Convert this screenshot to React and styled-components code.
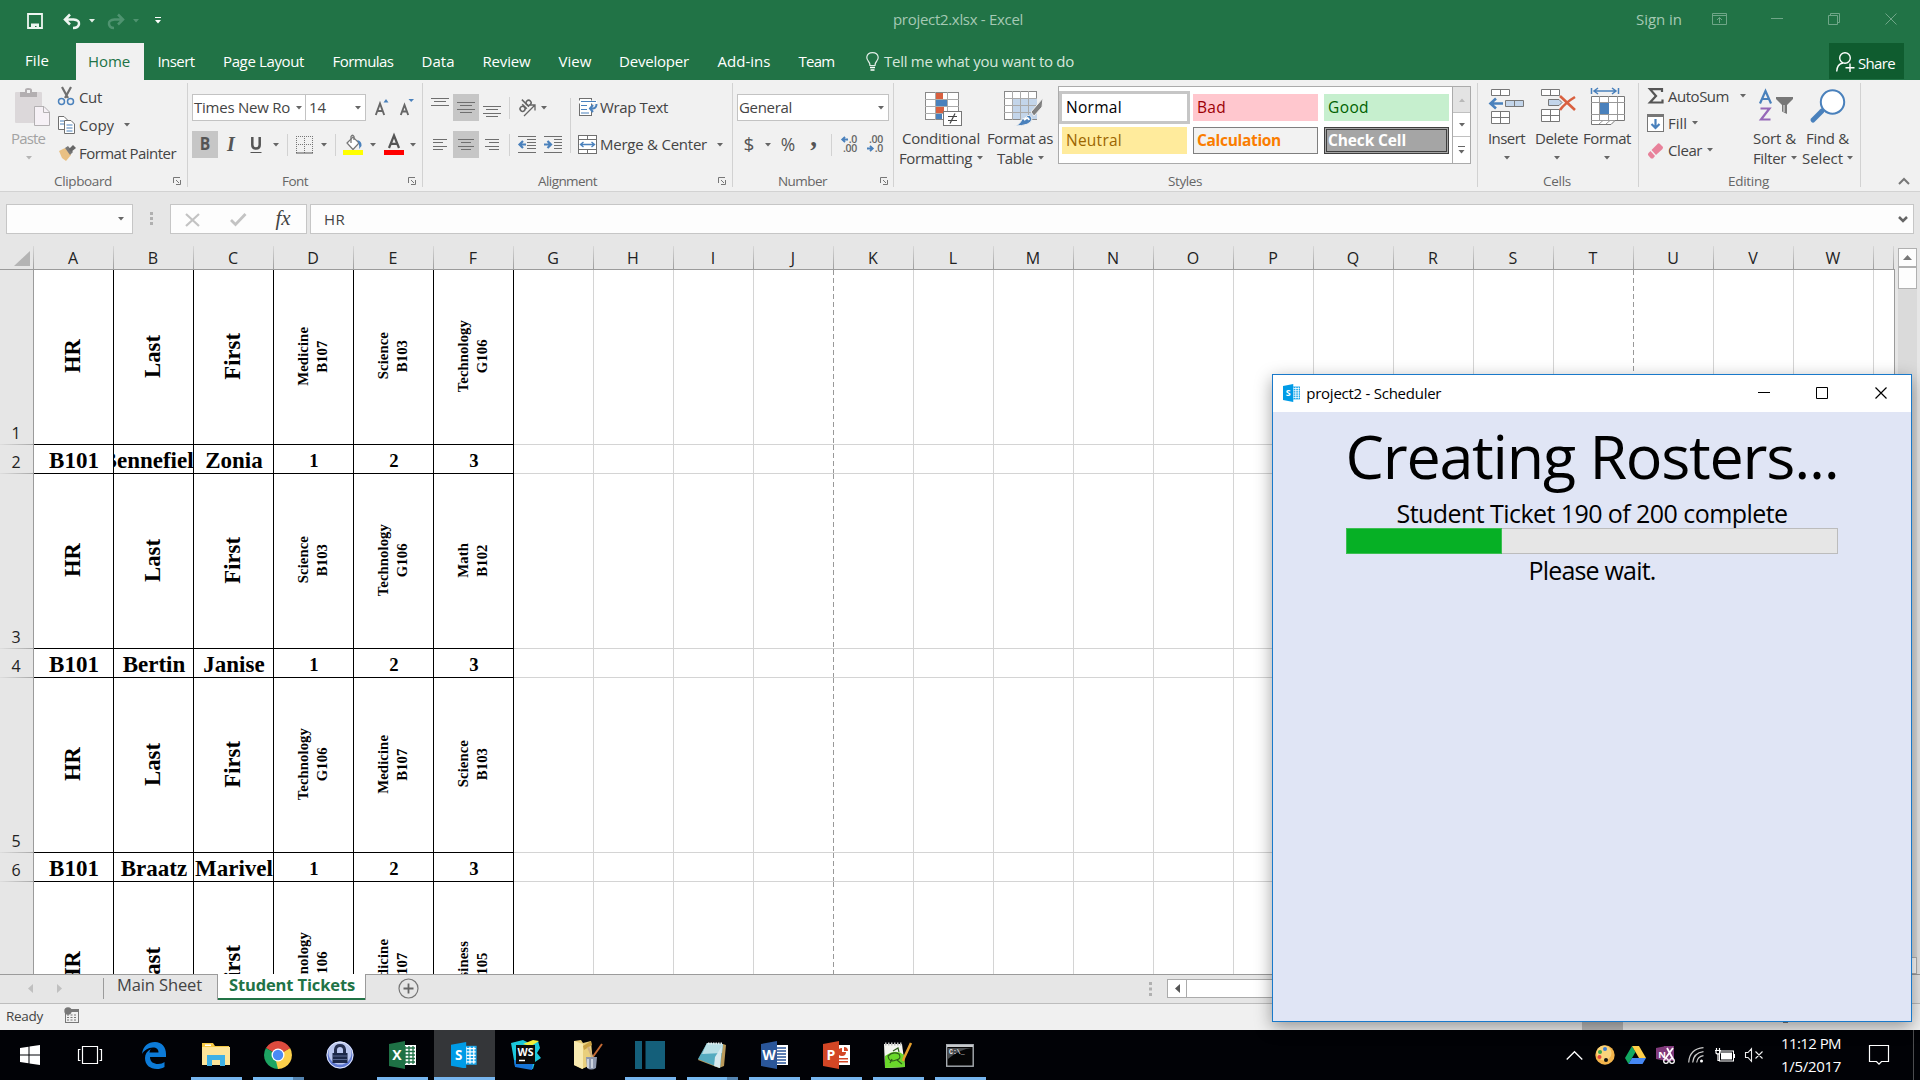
import React, { useLayoutEffect, useRef, useState } from "react";
import styled, { createGlobalStyle, css } from "styled-components";

const Global = createGlobalStyle`
  * { box-sizing: border-box; }
  body { margin: 0; background: #000; overflow: hidden; }
  svg { display: block; flex: none; }
`;

const GREEN = "#217346";
const GRAY = "#6f6f6f";
const BLUE = "#4a81bc";

/* ---------- text that keeps a fixed advance width ---------- */
const FitBox = styled.span`
  display: block;
  flex: none;
  width: ${(p) => p.$w}px;
  margin-left: ${(p) => p.$ml || 0}px;
  margin-top: ${(p) => p.$mt || 0}px;
  text-indent: ${(p) => (p.$size >= 25 ? 0 : -1)}px;
  font-size: ${(p) => p.$size || 15}px;
  font-weight: ${(p) => (p.$bold ? 700 : 400)};
  color: ${(p) => p.$color || "#444"};
  white-space: nowrap;
`;
const FitInner = styled.span`
  display: inline-block;
  text-indent: 0;
  white-space: pre;
`;
function Fit({ w, ml, mt, size, bold, color, children }) {
  const ref = useRef(null);
  const [gap, setGap] = useState(0);
  useLayoutEffect(() => {
    const natural = ref.current.getBoundingClientRect().width;
    setGap((w - natural) / String(children).length);
  }, []);
  return (
    <FitBox $w={w} $ml={ml} $mt={mt} $size={size} $bold={bold} $color={color}>
      <FitInner ref={ref} style={{ letterSpacing: gap }}>{children}</FitInner>
    </FitBox>
  );
}

const Svg = styled.svg`
  margin-left: ${(p) => p.$ml || 0}px;
  margin-top: ${(p) => p.$mt || 0}px;
  overflow: visible;
`;
const Ic = ({ w, h, ml, mt, children }) => (
  <Svg width={w} height={h} viewBox={`0 0 ${w} ${h}`} $ml={ml} $mt={mt} fill="none">{children}</Svg>
);
const Caret = ({ ml, mt, color = "#666" }) => (
  <Ic w={6} h={4} ml={ml} mt={mt}><path d="M0 0H6L3 3.5Z" fill={color} /></Ic>
);

/* ---------- frame ---------- */
const Screen = styled.div`
  position: relative;
  width: 1920px;
  height: 1080px;
  display: flex;
  flex-direction: column;
  overflow: hidden;
  font-family: "Open Sans", "Noto Sans", sans-serif;
  line-height: 20px;
  background: #e6e6e6;
`;
const TitleBar = styled.header`
  height: 43px;
  flex: none;
  display: flex;
  align-items: flex-start;
  background: ${GREEN};
`;
const TitleItem = styled.div`
  margin-left: ${(p) => p.$ml}px;
  margin-top: ${(p) => p.$mt}px;
`;
const TabBar = styled.nav`
  height: 37px;
  flex: none;
  display: flex;
  background: ${GREEN};
`;
const Tab = styled.div`
  width: ${(p) => p.$w}px;
  height: 37px;
  padding-top: ${(p) => (p.$file ? 7 : 8)}px;
  display: flex;
  justify-content: center;
  background: ${(p) => (p.$active ? "#f1f1f1" : "transparent")};
`;
const TellMe = styled.div`
  display: flex;
  padding: 8px 0 0 17px;
  width: 980px;
`;
const Share = styled.div`
  width: 75px;
  height: 36px;
  display: flex;
  padding: 9px 0 0 7px;
  background: #0f5c2f;
`;

/* ---------- ribbon ---------- */
const Ribbon = styled.section`
  height: 112px;
  flex: none;
  display: flex;
  background: #f1f1f1;
  border-bottom: 1px solid #d2d2d2;
`;
const Group = styled.div`
  width: ${(p) => p.$w}px;
  height: 111px;
  flex: none;
  display: flex;
  flex-direction: column;
  border-right: 1px solid transparent;
  border-image: linear-gradient(#f1f1f1 4px, #d2d2d2 4px, #d2d2d2 106px, #f1f1f1 106px) 1;
`;
const GroupBody = styled.div`
  height: 91px;
  display: flex;
`;
const GroupFoot = styled.div`
  height: 20px;
  display: flex;
  align-items: flex-start;
`;
const Stack = styled.div`
  display: flex;
  flex-direction: column;
  gap: ${(p) => p.$gap || 0}px;
  padding-top: ${(p) => p.$pt || 0}px;
  margin-left: ${(p) => p.$ml || 0}px;
`;
const Line = styled.div`
  display: flex;
  align-items: center;
  height: ${(p) => p.$h || 27}px;
  padding-left: ${(p) => p.$pl || 0}px;
`;
const BigButton = styled.div`
  width: ${(p) => p.$w}px;
  margin-left: ${(p) => p.$ml || 0}px;
  padding-top: 6px;
  display: flex;
  flex-direction: column;
  flex: none;
`;
const BigIcon = styled.div`
  height: 42px;
  padding: ${(p) => p.$pt || 0}px 0 0 ${(p) => p.$pl || 0}px;
`;
const Toggle = styled.div`
  width: 26px;
  height: 27px;
  flex: none;
  display: flex;
  align-items: center;
  justify-content: center;
  margin-left: ${(p) => p.$ml || 0}px;
  background: ${(p) => (p.$on ? "#c6c6c6" : "transparent")};
`;
const Divider = styled.div`
  width: 1px;
  flex: none;
  height: ${(p) => p.$h || 22}px;
  margin-left: ${(p) => p.$ml || 0}px;
  margin-top: ${(p) => p.$mt || 0}px;
  background: ${(p) => p.$c || "#d2d2d2"};
`;
const Combo = styled.div`
  width: ${(p) => p.$w}px;
  height: 27px;
  flex: none;
  margin-left: ${(p) => p.$ml || 0}px;
  display: flex;
  align-items: center;
  background: #fff;
  border: 1px solid #c3c3c3;
`;
const Glyph = styled.span`
  font-size: ${(p) => p.$size}px;
  font-family: ${(p) => (p.$serif ? '"Liberation Serif", serif' : "inherit")};
  font-weight: ${(p) => (p.$bold ? 700 : 400)};
  font-style: ${(p) => (p.$italic ? "italic" : "normal")};
  color: ${(p) => p.$color || "#555"};
  line-height: 20px;
  width: ${(p) => p.$w}px;
  text-align: center;
  flex: none;
  margin-left: ${(p) => p.$ml || 0}px;
  margin-top: ${(p) => p.$mt || 0}px;
  transform: scaleX(${(p) => p.$sx || 1});
`;

const Launcher = ({ ml }) => (
  <Ic w={8} h={8} ml={ml} mt={6}><path d="M0.5 6V0.5H7M3 3L6 6M7.5 3V7.5H3" stroke="#777" /></Ic>
);
const Foot = ({ pl, w, text, launch }) => (
  <GroupFoot>
    <Fit w={w} ml={pl} size={13.5} color="#666">{text}</Fit>
    {launch && <Launcher ml={launch} />}
  </GroupFoot>
);

function HLines({ rows, w, h, ml, mt, color = GRAY }) {
  return (
    <Ic w={w} h={h} ml={ml} mt={mt}>
      {rows.map(([x1, x2, y], i) => <path key={i} d={`M${x1} ${y + 0.5}H${x2}`} stroke={color} />)}
    </Ic>
  );
}

function Clipboard() {
  return (
    <Group $w={188}>
      <GroupBody>
        <BigButton $w={44} $ml={12}>
          <BigIcon $pt={2} $pl={3}>
            <Ic w={35} h={38}>
              <rect x="0" y="4" width="27" height="31" rx="1" fill="#dcd8da" />
              <path d="M5 4H10V2Q10 0 13 0Q17 0 17 2V4H22V9H5Z" fill="#b3afb1" /><rect x="12" y="2" width="3" height="3" fill="#f1f1f1" />
              <path d="M19.5 18.5H29L34.5 24V37.500H19.5Z" fill="#f6f1f6" stroke="#b3b0b2" /><path d="M28.500 18.500V24.500H34.500" stroke="#b3b0b2" />
            </Ic>
          </BigIcon>
          <Fit w={34} color="#a3a3a3">Paste</Fit>
          <Caret ml={14} mt={8} color="#b5b5b5" />
        </BigButton>
        <Stack $pt={2} $ml={2}>
          <Line $h={28}>
            <Ic w={17} h={19} mt={1}>
              <path d="M4 0L10 11M13 0L7 11" stroke="#6f6f6f" strokeWidth="2.200" />
              <circle cx="3.500" cy="14.500" r="3" stroke={BLUE} strokeWidth="1.500" /><circle cx="12.500" cy="14.500" r="3" stroke={BLUE} strokeWidth="1.500" />
            </Ic>
            <Fit w={23} ml={5} mt={2}>Cut</Fit>
          </Line>
          <Line $h={29}>
            <Ic w={17} h={18}>
              <path d="M0.500 0.500H6L9.500 4V13.500H0.500Z" fill="#fff" stroke={GRAY} /><path d="M2 5H6M2 8H6" stroke={BLUE} />
              <path d="M6.500 4.500H13L16.500 8V17.500H6.500Z" fill="#fff" stroke={GRAY} /><path d="M8.500 9H14.500M8.500 12H14.500M8.500 15H14.500" stroke={BLUE} />
            </Ic>
            <Fit w={35} ml={5}>Copy</Fit><Caret ml={9} />
          </Line>
          <Line $h={27}>
            <Ic w={18} h={16}>
              <path d="M1 6L7 3L13 10L8 16L4 13Z" fill="#e9c083" /><path d="M7 3L10 1L15 7L12 10Z" fill="#777" /><path d="M11 4L15 0L18 3L13 7Z" fill="#666" />
            </Ic>
            <Fit w={97} ml={4}>Format Painter</Fit>
          </Line>
        </Stack>
      </GroupBody>
      <Foot pl={55} w={58} text="Clipboard" launch={60} />
    </Group>
  );
}

function FontGroup() {
  return (
    <Group $w={235}>
      <GroupBody>
        <Stack $pt={14} $gap={10} $ml={4}>
          <Line>
            <Combo $w={114}><Fit w={96} ml={2} mt={-2}>Times New Ro</Fit><Caret ml={5} /></Combo>
            <Combo $w={61} $ml={-1}><Fit w={17} ml={4} mt={-2}>14</Fit><Caret ml={28} /></Combo>
            <Ic w={14} h={16} ml={9} mt={-2}>
              <path d="M8.500 3.500L11 0L13.500 3.500Z" fill={BLUE} /><path d="M0.800 16L5 4.500L9.200 16M2.200 12H7.800" stroke="#666" strokeWidth="1.900" />
            </Ic>
            <Ic w={15} h={16} ml={11} mt={-2}>
              <path d="M8.500 0H14L11.200 3Z" fill={BLUE} /><path d="M0.800 16L4.500 6L8.200 16M2.200 12.500H7" stroke="#666" strokeWidth="1.900" />
            </Ic>
          </Line>
          <Line>
            <Toggle $on><Glyph $size={17} $bold $w={14} $mt={-2} $sx={0.92}>B</Glyph></Toggle>
            <Glyph $size={20} $serif $bold $italic $w={14} $ml={6} $mt={-1}>I</Glyph>
            <Ic w={12} h={17} ml={12} mt={1}><path d="M2.300 0V8Q2.300 11.500 6 11.500Q9.700 11.500 9.700 8V0" stroke="#555" strokeWidth="2.500" /><path d="M0.500 15.500H11.500" stroke="#555" /></Ic>
            <Caret ml={11} />
            <Divider $ml={8} />
            <Ic w={17} h={18} ml={8}>
              <path d="M0.500 0V17M8.500 0V17M16.500 0V17M0 0.500H17M0 8.500H17" stroke="#777" strokeDasharray="1 1" /><path d="M0 17H17" stroke="#555" />
            </Ic>
            <Caret ml={8} /><Divider $ml={8} />
            <Ic w={21} h={20} ml={7}>
              <path d="M4 8L10 2L16 8L10 14.500Z" fill="#fff" stroke="#777" strokeWidth="1.200" /><path d="M8 8V1.500Q9.500-1 11 1.500V5" stroke="#777" strokeWidth="1.300" />
              <path d="M14 5Q19 6 18.500 11L16 14Q17 9 14 5Z" fill={BLUE} /><rect y="15" width="20" height="5" fill="#ff0" />
            </Ic>
            <Caret ml={6} />
            <Ic w={20} h={20} ml={8}><path d="M5 13L10 0.500L15 13M7 8.800H13" stroke="#555" strokeWidth="2.200" /><rect y="15" width="20" height="5" fill="#f00" /></Ic>
            <Caret ml={6} />
          </Line>
        </Stack>
      </GroupBody>
      <Foot pl={95} w={26} text="Font" launch={99} />
    </Group>
  );
}

function Alignment() {
  return (
    <Group $w={310}>
      <GroupBody>
        <Stack $pt={14} $gap={10} $ml={5}>
          <Line>
            <HLines w={18} h={8} ml={3} mt={-11} rows={[[0, 18, 0], [3, 15, 3], [0, 18, 7]]} />
            <Toggle $on $ml={4}><HLines w={18} h={13} rows={[[0, 18, 1], [3, 15, 4], [0, 18, 8], [3, 15, 11]]} /></Toggle>
            <HLines w={18} h={11} ml={4} mt={7} rows={[[0, 18, 0], [3, 15, 3], [0, 18, 7], [3, 15, 10]]} />
            <Divider $ml={8} />
            <Ic w={20} h={18} ml={7} mt={-2}>
              <g transform="rotate(-45 7 8)" stroke="#666" strokeWidth="1.500"><circle cx="4" cy="9" r="2.500" /><path d="M7 5.500V12M10 2V12" /><circle cx="12.500" cy="9" r="2.500" /></g>
              <path d="M7 18L18 7M12.500 7H18V12.500" stroke="#666" strokeWidth="1.300" />
            </Ic>
            <Caret ml={4} />
          </Line>
          <Line>
            <HLines w={14} h={11} ml={5} rows={[[0, 14, 0], [0, 10, 3], [0, 14, 7], [0, 10, 10]]} />
            <Toggle $on $ml={6}><HLines w={16} h={11} rows={[[0, 16, 0], [3, 13, 3], [0, 16, 7], [3, 13, 10]]} /></Toggle>
            <HLines w={14} h={11} ml={6} rows={[[0, 14, 0], [4, 14, 3], [0, 14, 7], [4, 14, 10]]} />
            <Divider $ml={10} />
            <Ic w={18} h={17} ml={8} mt={-1}>
              <path d="M0 0.500H18M9 3.500H18M9 6.500H18M9 9.500H18M9 12.500H18M0 16.500H18" stroke={GRAY} /><path d="M8 8.500H2M5 5L1.500 8.500L5 12" stroke={BLUE} strokeWidth="2.200" />
            </Ic>
            <Ic w={18} h={17} ml={8} mt={-1}>
              <path d="M0 0.500H18M10 3.500H18M10 6.500H18M10 9.500H18M10 12.500H18M0 16.500H18" stroke={GRAY} /><path d="M0 8.500H6M3.500 5L7 8.500L3.500 12" stroke={BLUE} strokeWidth="2.200" />
            </Ic>
          </Line>
        </Stack>
        <Divider $h={55} $ml={8} $mt={18} />
        <Stack $pt={14} $gap={10} $ml={7}>
          <Line>
            <Ic w={19} h={19} ml={1} mt={-1}>
              <rect x="0.500" y="0.500" width="12" height="17" fill="#fff" stroke={GRAY} /><path d="M0 5.500H18V2.500H0Z" fill="#fff" />
              <path d="M2 3.500H17M2 7.500H8M2 11.500H8M2 15H10" stroke={BLUE} /><path d="M11 10.500H14Q17.500 10 17.500 6M14 7L11 10.500L14 14" stroke={BLUE} strokeWidth="2" />
            </Ic>
            <Fit w={68} ml={3} mt={-2}>Wrap Text</Fit>
          </Line>
          <Line>
            <Ic w={19} h={19} mt={-1}>
              <rect x="0.500" y="0.500" width="18" height="18" fill="#fff" stroke={GRAY} /><path d="M0 4.500H19M0 14.500H19M9.500 0V4.500M9.500 14.500V19" stroke={GRAY} />
              <path d="M2.500 9.500H16.500M5.500 7L2.500 9.500L5.500 12M13.500 7L16.500 9.500L13.500 12" stroke={BLUE} strokeWidth="1.400" />
            </Ic>
            <Fit w={107} ml={4} mt={-2}>Merge &amp; Center</Fit><Caret ml={9} />
          </Line>
        </Stack>
      </GroupBody>
      <Foot pl={116} w={59} text="Alignment" launch={120} />
    </Group>
  );
}

const DecBox = styled.div`
  width: 17px;
  margin-left: ${(p) => p.$ml}px;
  margin-top: -1px;
  display: flex;
  flex-direction: column;
  font-size: 10.5px;
  font-weight: 600;
  line-height: 9px;
  letter-spacing: -0.3px;
  color: #666;
`;
const DecRow = styled.div`
  display: flex;
  justify-content: flex-end;
  align-items: center;
  gap: 1px;
  height: 9px;
`;
const TinyArrow = ({ flip }) => (
  <Ic w={7} h={7}><path d={flip ? "M0 3.500H5M3 0.800L5.800 3.500L3 6.200" : "M7 3.500H2M4 0.800L1.200 3.500L4 6.200"} stroke={BLUE} strokeWidth="1.800" /></Ic>
);
function NumberGroup() {
  return (
    <Group $w={161}>
      <GroupBody>
        <Stack $pt={14} $gap={10} $ml={4}>
          <Line><Combo $w={152}><Fit w={53} ml={2} mt={-2}>General</Fit><Caret ml={85} /></Combo></Line>
          <Line>
            <Glyph $size={19} $w={12} $ml={6} $mt={-2}>$</Glyph><Caret ml={10} />
            <Glyph $size={19} $w={18} $ml={8} $mt={-2} $sx={0.92}>%</Glyph>
            <Glyph $size={27} $serif $bold $w={9} $ml={12} $mt={-16}>,</Glyph>
            <Divider $ml={13} />
            <DecBox $ml={8}><DecRow><TinyArrow />.0</DecRow><DecRow>.00</DecRow></DecBox>
            <DecBox $ml={9}><DecRow>.00</DecRow><DecRow><TinyArrow flip />.0</DecRow></DecBox>
          </Line>
        </Stack>
      </GroupBody>
      <Foot pl={46} w={49} text="Number" launch={52} />
    </Group>
  );
}

const Gallery = styled.div`
  margin-left: 4px;
  margin-top: 6px;
  width: 413px;
  height: 78px;
  flex: none;
  display: flex;
  background: #fff;
  border: 1px solid #ababab;
`;
const Swatches = styled.div`
  width: 394px;
  padding: 7px 3px;
  display: grid;
  grid-template-columns: repeat(3, 125px);
  grid-auto-rows: 27px;
  gap: 6px;
`;
const Swatch = styled.div`
  display: flex;
  align-items: center;
  padding-bottom: 1px;
  background: ${(p) => p.$bg};
  ${(p) => p.$kind === "on" && css`box-shadow: 0 0 0 3px #c6c6c6;`}
  ${(p) => p.$kind === "line" && css`box-shadow: inset 0 0 0 1px #7f7f7f;`}
  ${(p) => p.$kind === "double" && css`box-shadow: inset 0 0 0 1px #3f3f3f, inset 0 0 0 2px #a5a5a5, inset 0 0 0 3px #3f3f3f;`}
`;
const Spin = styled.div`
  width: 18px;
  display: flex;
  flex-direction: column;
  border-left: 1px solid #ababab;
`;
const SpinCell = styled.div`
  height: ${(p) => p.$h}px;
  display: flex;
  align-items: center;
  justify-content: center;
  background: ${(p) => (p.$off ? "#e3e3e3" : "#fff")};
  border-bottom: ${(p) => (p.$last ? "none" : "1px solid #c0c0c0")};
`;
function Styles() {
  return (
    <Group $w={584}>
      <GroupBody>
        <BigButton $w={84} $ml={6}>
          <BigIcon $pt={6} $pl={25}>
            <Ic w={36} h={34}>
              <rect x="0.500" y="0.500" width="33" height="27" fill="#fff" stroke="#888" /><path d="M0 7.500H34M0 14.500H34M0 21.500H34M10.500 0V28M22.500 0V28" stroke="#aaa" />
              <path d="M11 1H18V7H11ZM11 15H19V21H11Z" fill="#d9603f" /><path d="M11 8H22V14H11ZM11 22H17V27H11Z" fill={BLUE} />
              <rect x="18.500" y="19.500" width="18" height="14" fill="#fff" stroke="#777" /><path d="M23 24.500H32M23 28.500H32M30 21.500L25 31.500" stroke="#444" strokeWidth="1.200" />
            </Ic>
          </BigIcon>
          <Fit w={78} ml={3}>Conditional</Fit>
          <Line $h={19}><Fit w={73}>Formatting</Fit><Caret ml={4} /></Line>
        </BigButton>
        <BigButton $w={66} $ml={4}>
          <BigIcon $pt={5} $pl={16}>
            <Ic w={37} h={36}>
              <rect x="0.500" y="0.500" width="32" height="28" fill="#fff" stroke="#888" /><rect x="9" y="8" width="24" height="20" fill="#c3d5ea" />
              <path d="M0 7.500H33M0 14.500H33M0 21.500H33M8.500 0V29M16.500 0V29M24.500 0V29" stroke="#aaa" />
              <path d="M39 7L27 21L30 25L38 16Z" fill="#808080" stroke="#f1f1f1" /><path d="M21 27Q26 21 28 28Q27 35 10 35Q16 34 18 28Z" fill={BLUE} stroke="#f1f1f1" /><path d="M20 29Q24 25 25 29" stroke="#fff" strokeWidth="2" />
            </Ic>
          </BigIcon>
          <Fit w={66}>Format as</Fit>
          <Line $h={19} $pl={10}><Fit w={36}>Table</Fit><Caret ml={4} /></Line>
        </BigButton>
        <Gallery>
          <Swatches>
            <Swatch $bg="#fff" $kind="on"><Fit w={56} ml={5} size={15.5} color="#000">Normal</Fit></Swatch>
            <Swatch $bg="#ffc7ce"><Fit w={29} ml={5} size={15.5} color="#9c0006">Bad</Fit></Swatch>
            <Swatch $bg="#c6efce"><Fit w={41} ml={5} size={15.5} color="#006100">Good</Fit></Swatch>
            <Swatch $bg="#ffeb9c"><Fit w={56} ml={5} size={15.5} color="#9c6500">Neutral</Fit></Swatch>
            <Swatch $bg="#f2f2f2" $kind="line"><Fit w={84} ml={5} size={15.5} bold color="#fa7d00">Calculation</Fit></Swatch>
            <Swatch $bg="#a5a5a5" $kind="double"><Fit w={78} ml={5} size={15.5} bold color="#fff">Check Cell</Fit></Swatch>
          </Swatches>
          <Spin>
            <SpinCell $h={26} $off><Ic w={6} h={4}><path d="M0 4H6L3 0.500Z" fill="#b8b8b8" /></Ic></SpinCell>
            <SpinCell $h={24}><Caret /></SpinCell>
            <SpinCell $h={26} $last><Ic w={7} h={8}><path d="M0 0.500H7" stroke="#666" /><path d="M0.500 4H6.500L3.500 7.500Z" fill="#666" /></Ic></SpinCell>
          </Spin>
        </Gallery>
      </GroupBody>
      <Foot pl={275} w={34} text="Styles" />
    </Group>
  );
}

function Cells() {
  return (
    <Group $w={161}>
      <GroupBody>
        <BigButton $w={38} $ml={10}>
          <BigIcon $pt={3}>
            <Ic w={37} h={35}>
              <path d="M3.500 0.500H21.500V6.500H3.500ZM12.500 0.500V6.500M3.500 22.500H21.500V34.500H3.500ZM3.500 28.500H21.500M12.500 22.500V34.500" fill="#fff" stroke="#777" />
              <path d="M17.500 11.500H35.500V17.500H17.500ZM26.500 11.500V17.500" fill="#c3d5ea" stroke="#777" /><path d="M15 14.500H3M8 9.500L2.500 14.500L8 19.500" stroke={BLUE} strokeWidth="2.600" />
            </Ic>
          </BigIcon>
          <Fit w={37} ml={1}>Insert</Fit><Caret ml={16} mt={8} />
        </BigButton>
        <BigButton $w={44} $ml={10}>
          <BigIcon $pt={3} $pl={5}>
            <Ic w={36} h={34}>
              <path d="M0.500 0.500H18.500V6.500H0.500ZM9.500 0.500V6.500M0.500 20.500H18.500V32.500H0.500ZM0.500 26.500H18.500M9.500 20.500V32.500" fill="#fff" stroke="#777" />
              <path d="M7.500 10.500H18L21 13.500L18 16.500H7.500Z" fill="#c3d5ea" stroke="#777" /><path d="M19 7L34 21M34 8Q24 14 19 21" stroke="#d9603f" strokeWidth="2.600" />
            </Ic>
          </BigIcon>
          <Fit w={43}>Delete</Fit><Caret ml={18} mt={8} />
        </BigButton>
        <BigButton $w={48} $ml={4}>
          <BigIcon $pt={2} $pl={7}>
            <Ic w={35} h={37}>
              <path d="M0.500 0V6M27.500 0V6M3 3H25M7 0L3 3L7 6M21 0L25 3L21 6" stroke={BLUE} strokeWidth="1.500" />
              <path d="M0.500 8.500H33.500V32.500H24L20 36.500H0.500Z" fill="#fff" stroke="#777" /><path d="M0 14.500H34M0 26.500H34M8.500 8V32M17.500 8V32M26.500 8V32M0 32.500H24M8 36L12 32.500M15 36L19 32.500" stroke="#999" />
              <rect x="9" y="15" width="9" height="11" fill={BLUE} />
            </Ic>
          </BigIcon>
          <Fit w={48}>Format</Fit><Caret ml={20} mt={8} />
        </BigButton>
      </GroupBody>
      <Foot pl={66} w={28} text="Cells" />
    </Group>
  );
}

function Editing() {
  return (
    <Group $w={222}>
      <GroupBody>
        <Stack $pt={3} $ml={8}>
          <Line $h={26}>
            <Ic w={16} h={16} ml={1}><path d="M14 4V1.200H2L8 8L2 14.500H14.500V11.500" stroke="#555" strokeWidth="2.200" /></Ic>
            <Fit w={61} ml={5}>AutoSum</Fit><Caret ml={10} mt={-1} />
          </Line>
          <Line $h={28}>
            <Ic w={17} h={18}><rect x="0.500" y="0.500" width="16" height="17" fill="#fff" stroke="#777" /><path d="M0 1.500H17" stroke="#777" strokeWidth="3" /><path d="M8.500 5V14M4.500 10L8.500 14L12.500 10" stroke={BLUE} strokeWidth="2.200" /></Ic>
            <Fit w={19} ml={5}>Fill</Fit><Caret ml={4} />
          </Line>
          <Line $h={27}>
            <Ic w={17} h={16}><path d="M11 0.500Q12 0 13 1L16 4Q16 5 15.500 6L9 12L4.500 7Z" fill="#e8819a" /><path d="M3.500 8L8 13L6 15.500H4L1 12V10.500Z" fill="#e8819a" /></Ic>
            <Fit w={34} ml={5} mt={-2}>Clear</Fit><Caret ml={4} mt={-1} />
          </Line>
        </Stack>
        <BigButton $w={44} $ml={8}>
          <BigIcon $pt={4} $pl={5}>
            <Ic w={35} h={32}>
              <path d="M1 13.500L6.500 1L12 13.500M3 9H10" stroke={BLUE} strokeWidth="2.200" /><path d="M1.500 18.500H10.500L2 29.500H11.500" stroke="#9668b8" strokeWidth="2.200" />
              <path d="M17 7H34V9L28 15V24L23 21.500V15L17 9Z" fill="#777" /><path d="M25 15V22" stroke="#f1f1f1" />
            </Ic>
          </BigIcon>
          <Fit w={43}>Sort &amp;</Fit>
          <Line $h={19}><Fit w={33}>Filter</Fit><Caret ml={4} /></Line>
        </BigButton>
        <BigButton $w={48} $ml={5}>
          <BigIcon $pt={3} $pl={8}>
            <Ic w={35} h={34}><path d="M11 22L2 31" stroke={BLUE} strokeWidth="5" strokeLinecap="round" /><circle cx="21.500" cy="13" r="11.700" fill="#fff" stroke={BLUE} strokeWidth="2" /></Ic>
          </BigIcon>
          <Fit w={43} ml={4}>Find &amp;</Fit>
          <Line $h={19}><Fit w={41}>Select</Fit><Caret ml={3} /></Line>
        </BigButton>
      </GroupBody>
      <Foot pl={90} w={41} text="Editing" />
    </Group>
  );
}

/* ---------- formula bar ---------- */
const FormulaBar = styled.section`
  height: 50px;
  flex: none;
  display: flex;
  padding: 12px 0 0 6px;
  background: #e6e6e6;
`;
const Field = styled.div`
  width: ${(p) => p.$w}px;
  margin-left: ${(p) => p.$ml || 0}px;
  height: 30px;
  flex: none;
  display: flex;
  align-items: center;
  background: #fdfdfd;
  border: 1px solid #c6c6c6;
`;

/* ---------- sheet ---------- */
const Sheet = styled.main`
  height: 732px;
  flex: none;
  display: flex;
  overflow: hidden;
`;
const Grid = styled.div`
  width: 1895px;
  flex: none;
  overflow: hidden;
  border-right: 1px solid #9b9b9b;
  border-image: linear-gradient(#e6e6e6 28px, #9b9b9b 28px) 1;
`;
const Row = styled.div`
  display: grid;
  grid-template-columns: 34px repeat(23, 80px) 20px;
  height: ${(p) => p.$h}px;
`;
const ColHead = styled.div`
  border-bottom: 1px solid #9b9b9b;
  padding-top: ${(p) => (p.$corner ? 9 : 6)}px;
  padding-right: ${(p) => (p.$corner ? 0 : 2)}px;
  font-size: 16px;
  text-align: center;
  color: #222;
  background: linear-gradient(#d8d8d8, #9b9b9b) right 4px / 1px 24px no-repeat;
`;
const RowHead = styled.div`
  display: flex;
  align-items: flex-end;
  justify-content: center;
  padding: 0 1px 1px 0;
  font-size: 16px;
  line-height: 22px;
  color: #222;
  border-right: 1px solid #9b9b9b;
  background: linear-gradient(90deg, #dedede, #a8a8a8) left bottom / 100% 1px no-repeat #e6e6e6;
`;
const Cell = styled.div`
  display: flex;
  align-items: center;
  justify-content: center;
  overflow: hidden;
  background: #fff;
  border-bottom: 1px solid ${(p) => (p.$ink ? "#000" : "#d4d4d4")};
  border-right: 1px solid ${(p) => (p.$ink ? "#000" : "#d4d4d4")};
  ${(p) => p.$last && "border-right: none;"}
  ${(p) => p.$dash && css`
    border-right: none;
    background: repeating-linear-gradient(#999 0 5px, #fff 5px 8px) right / 1px 100% no-repeat #fff;
  `}
  font-family: "Liberation Serif", serif;
  font-weight: 700;
  font-size: ${(p) => p.$size || 23}px;
  padding-top: ${(p) => (p.$flat ? 3 : 0)}px;
  padding-left: ${(p) => (p.$flat ? 1 : 0)}px;
  white-space: nowrap;
  color: #000;
`;
const Turned = styled.div`
  writing-mode: vertical-rl;
  transform: rotate(180deg);
  text-align: center;
  line-height: ${(p) => (p.$small ? 18.5 : 26)}px;
  font-size: ${(p) => (p.$small ? 14.7 : 22.7)}px;
  letter-spacing: ${(p) => (p.$small ? 0.1 : 0)}px;
  margin: 0 2px 2px 0;
`;
const COLS = "ABCDEFGHIJKLMNOPQRSTUVW".split("");
const ROWS = [
  ["HR", "Last", "First", "Medicine|B107", "Science|B103", "Technology|G106"],
  ["B101", "Bennefield", "Zonia", "1", "2", "3"],
  ["HR", "Last", "First", "Science|B103", "Technology|G106", "Math|B102"],
  ["B101", "Bertin", "Janise", "1", "2", "3"],
  ["HR", "Last", "First", "Technology|G106", "Medicine|B107", "Science|B103"],
  ["B101", "Braatz", "Marivel", "1", "2", "3"],
  ["HR", "Last", "First", "Technology|G106", "Medicine|B107", "Business|B105"],
];
function SheetRow({ cells, index }) {
  const tall = index % 2 === 0;
  return (
    <Row $h={tall ? 175 : 29}>
      <RowHead>{index + 1}</RowHead>
      {COLS.map((c, i) => {
        const t = cells[i];
        if (t === undefined) return <Cell key={c} $dash={c === "J" || c === "T"} />;
        if (!tall) return <Cell key={c} $ink $flat $size={i > 2 ? 18.7 : 23}>{t}</Cell>;
        return (
          <Cell key={c} $ink>
            <Turned $small={i > 2}>{t.split("|").map((s) => <div key={s}>{s}</div>)}</Turned>
          </Cell>
        );
      })}
      <Cell $last />
    </Row>
  );
}
const ScrollCol = styled.div`
  width: 25px;
  padding: 6px 3px 0 3px;
  display: flex;
  flex-direction: column;
  background: #e6e6e6;
`;
const ScrollBtn = styled.div`
  height: ${(p) => p.$h}px;
  flex: none;
  display: flex;
  align-items: center;
  justify-content: center;
  background: #fdfdfd;
  border: 1px solid #b0b0b0;
`;
const Track = styled.div`
  flex: 1;
  background: #dadada;
`;

/* ---------- sheet tabs / status ---------- */
const SheetTabs = styled.div`
  height: 29px;
  flex: none;
  display: flex;
  overflow: hidden;
  background: linear-gradient(#9b9b9b, #9b9b9b) 0 0 / 100% 1px no-repeat #e6e6e6;
`;
const SheetTab = styled.div`
  width: ${(p) => p.$w}px;
  height: ${(p) => (p.$on ? 26 : 25)}px;
  display: flex;
  flex: none;
  padding: 1px 0 0 ${(p) => (p.$on ? 12 : 14)}px;
  ${(p) => p.$on && css`background: #fff; border: solid #9b9b9b; border-width: 0 1px; box-shadow: inset 0 -2px 0 ${GREEN};`}
`;
const HThumb = styled.div`
  width: 500px;
  height: 19px;
  flex: none;
  margin-top: 5px;
  background: #fff;
  border: 1px solid #ababab;
`;
const HBtn = styled(HThumb)`
  width: 20px;
  margin-left: 15px;
  margin-right: -1px;
  display: flex;
  align-items: center;
  justify-content: center;
`;
const Status = styled.div`
  height: 27px;
  flex: none;
  display: flex;
  align-items: flex-start;
  padding: 3px 0 0 7px;
  background: #f0f0f0;
  border-top: 1px solid #bdbdbd;
`;
const StatusMark = styled.div`
  width: ${(p) => p.$w}px;
  height: ${(p) => p.$h}px;
  margin-left: ${(p) => p.$ml}px;
  background: ${(p) => p.$c};
`;

/* ---------- scheduler window ---------- */
const Dialog = styled.section`
  position: absolute;
  left: 1272px;
  top: 374px;
  width: 640px;
  height: 648px;
  display: flex;
  flex-direction: column;
  background: #e0e5f5;
  border: 1px solid #1979ca;
  box-shadow: 0 5px 16px rgba(0, 0, 0, 0.38);
`;
const DialogBar = styled.div`
  height: 37px;
  flex: none;
  display: flex;
  align-items: flex-start;
  padding: 9px 0 0 10px;
  background: #fff;
`;
const DialogBody = styled.div`
  display: flex;
  flex-direction: column;
  align-items: center;
`;
const Text = styled.div`
  line-height: ${(p) => p.$lh}px;
  height: ${(p) => p.$lh}px;
  margin-top: ${(p) => p.$mt || 0}px;
`;
const Progress = styled.div`
  width: 492px;
  height: 26px;
  margin-top: 1px;
  background: #e6e6e6;
  border: 1px solid #bcbcbc;
`;
const Bar = styled.div`
  height: 26px;
  margin: -1px 0 0 -1px;
  background: #06b025;
  border: 1px solid #3cbf52;
`;
const progress = 156;

/* ---------- taskbar ---------- */
const Taskbar = styled.footer`
  height: 50px;
  flex: none;
  display: flex;
  background: #010206;
`;
const Slot = styled.div`
  width: 62px;
  height: 50px;
  flex: none;
  display: flex;
  flex-direction: column;
  align-items: center;
  justify-content: space-between;
  background: ${(p) => (p.$on ? "linear-gradient(90deg, #343639 61px, transparent 61px)" : "transparent")};
`;
const SlotIcon = styled.div`
  height: 47px;
  display: flex;
  align-items: center;
  padding: 3px 2px 0 0;
`;
const Under = styled.div`
  width: ${(p) => (p.$full ? 62 : 51)}px;
  height: 3px;
  margin-left: ${(p) => (p.$full ? 0 : -1)}px;
  background: ${(p) => (p.$split ? "linear-gradient(90deg, #76b9f1 40px, #5484b0 40px)" : "#76b5ee")};
  clip-path: ${(p) => (p.$full ? "inset(0 1px 0 0)" : "none")};
`;
const Tray = styled.div`
  margin-left: auto;
  width: 353px;
  display: flex;
  align-items: center;
  border-right: 1px solid #4b4c4f;
`;
const Clock = styled.div`
  width: 60px;
  margin-left: 19px;
  line-height: 23px;
`;

const Letter = ({ x, y, size = 14, children, fill = "#fff" }) => (
  <text x={x} y={y} fontFamily="Open Sans" fontWeight="700" fontSize={size} fill={fill} textAnchor="middle">{children}</text>
);
const OfficeIcon = ({ letter, a, b, scale = 1, grid, lines, pie }) => (
  <svg width={27 * scale} height={28 * scale} viewBox="0 0 27 28" fill="none">
    <rect x="13" y="4" width="14" height="20" fill={grid === "blue" ? b : "#fff"} />
    {grid && <path d="M16 5V23M20 5V23M24 5V23M15 7H26M15 10.500H26M15 14H26M15 17.500H26M15 21H26" stroke={grid === "blue" ? "#fff" : b} strokeWidth="1.300" />}
    {lines && <path d="M15 7H25M15 10H25M15 13H25M15 16H25M15 19H25M15 22H25" stroke={b} strokeWidth="1.300" />}
    {pie && <g><path d="M19 7A4 4 0 1 0 23 11H19Z" fill={b} /><path d="M21 6A4 4 0 0 1 25 10H21ZM16 17H25V18.500H16ZM16 20H25V21.500H16Z" fill={b} /></g>}
    <path d="M0 3L16 0V28L0 25Z" fill={a} />
    <Letter x={8} y={19}>{letter}</Letter>
  </svg>
);

const Windows = () => <Ic w={20} h={20}><path d="M0 3L8.500 1.800V9.500H0ZM9.500 1.600L20 0V9.500H9.500ZM0 10.500H8.500V18.200L0 17ZM9.500 10.500H20V20L9.500 18.400Z" fill="#fff" /></Ic>;
const TaskView = () => <Ic w={24} h={18} ml={-4}><path d="M4.500 0.500H19.500V17.500H4.500ZM2.500 3.500H0.500V14.500H2.500M21.500 3.500H23.500V14.500H21.500" stroke="#fff" strokeWidth="1.200" /></Ic>;
const Edge = () => (
  <Ic w={24} h={27}><path d="M0 12C1 4 6 0 13 0C20 0 24 5 24 12V15H8C8 20 12 22 16 22C19 22 21 21 22.500 20V25C20 26.500 17.500 27 15 27C8 27 3 23 3 16C3 12 5 9 9 7C8 8 7.500 9.500 7.500 10.500H16.500C16.500 7 14.500 5.500 11 5.500C6 5.500 2 8.500 0 12Z" fill="#0c7bd8" /></Ic>
);
const Explorer = () => (
  <Ic w={28} h={24}><path d="M0 0H11L13 3H27V22H0Z" fill="#f6c944" /><rect x="3" y="1.500" width="6" height="1.500" fill="#fff" /><rect x="0" y="4" width="28" height="18" fill="#fde59a" /><path d="M5 23V12H23V23H18V17H10V23Z" fill="#3eb1e6" /></Ic>
);
const Chrome = () => (
  <Ic w={28} h={28}>
    <path d="M14 14L1.900 7A14 14 0 0 1 26.100 7Z" fill="#dd4b3e" /><path d="M14 14L26.100 7A14 14 0 0 1 14 28Z" fill="#fcd04b" /><path d="M14 14L14 28A14 14 0 0 1 1.900 7Z" fill="#1da462" />
    <path d="M14 7H26.100L14 14Z" fill="#dd4b3e" /><path d="M20 17.500L14 28L12 20Z" fill="#fcd04b" /><circle cx="14" cy="14" r="6.500" fill="#fff" /><circle cx="14" cy="14" r="5.200" fill="#4a8af4" />
  </Ic>
);
const Lock = () => (
  <Ic w={28} h={28}>
    <circle cx="14" cy="14" r="13.500" fill="#5f79d2" /><circle cx="14" cy="12" r="11.500" fill="#b9c6ee" /><circle cx="14" cy="14" r="13" stroke="#e7ebf7" />
    <path d="M9.500 13V8.500Q10 4.500 14 4.500Q18 4.500 18.500 8.500V13" stroke="#26304f" strokeWidth="3" /><rect x="6.500" y="12" width="15" height="10" fill="#1c2848" /><path d="M7 15H21M7 18.500H21" stroke="#5a6890" />
  </Ic>
);
const WebStorm = () => (
  <Ic w={30} h={30}>
    <path d="M0 3L12 0L20 4L27 1L29 8L26 13L30 18L24 22L22 29L4 26Z" fill="#1bc8dc" /><path d="M12 4L22 0L28 1L20 6Z" fill="#f4ee3c" /><path d="M3 20L22 24L21 30L4 27Z" fill="#1674d8" />
    <rect x="5" y="5" width="19" height="19" fill="#0a0a0a" /><Letter x={14.500} y={15.500} size={10.500}>WS</Letter><path d="M8 20.500H14" stroke="#fff" strokeWidth="1.500" />
  </Ic>
);
const ArtFolder = () => (
  <Ic w={29} h={30}>
    <path d="M0 1L7 0L9 3L17 1L19 24L8 29L0 25Z" fill="#e9cf7c" /><path d="M0 1L9 4V29L0 25Z" fill="#f8eab0" /><path d="M9 6L17 1L18 5L10 10Z" fill="#c9a042" />
    <path d="M28 4L18 18" stroke="#c46a34" strokeWidth="2" /><path d="M14 7L20 21" stroke="#d0b080" strokeWidth="2" /><path d="M12 17H23L22 28Q17 31 13 28Z" fill="#8e98ae" /><path d="M14 19V28M18 19V28" stroke="#dfe5ee" strokeWidth="1.500" />
  </Ic>
);
const Tiles = () => <Ic w={30} h={28}><path d="M0 0H7V28H0ZM10.500 0H30V28H10.500Z" fill="#145f7a" /></Ic>;
const Notepad = () => (
  <Ic w={28} h={26}><path d="M9 1L25 2L28 3L26 24L21 26L0 18Z" fill="#b9995a" /><path d="M9 1L25 2L22 26L0 17Z" fill="#55abc0" /><path d="M9 1L25 2L24 11L4 12Z" fill="#b9dfe6" /><path d="M17 15L24 4L22 26L16 24Z" fill="#d7e9ee" /><path d="M10 1.500H25" stroke="#e8eef0" strokeWidth="2" strokeDasharray="1.500 1" /></Ic>
);
const NotepadPP = () => (
  <Ic w={28} h={27}>
    <path d="M0 2H18L21 25L1 26Z" fill="#f4f6f0" /><path d="M1 14Q12 6 20 13L21 25L1 26Z" fill="#6ad82a" /><path d="M1 2H18" stroke="#bbb" strokeWidth="3" strokeDasharray="1.500 1.500" />
    <path d="M4 14Q9 9 15 12Q18 17 12 18Q5 21 4 14ZM9 9L14 6L15 10M8 17L6 21M13 18L18 22" stroke="#2f5b1c" strokeWidth="1.200" /><path d="M27 1L20 16L19 19" stroke="#e5a02d" strokeWidth="2.500" />
  </Ic>
);
const Cmd = () => (
  <Ic w={28} h={23}><rect x="0.700" y="0.700" width="26.500" height="21.500" fill="#050505" stroke="#a8adb2" strokeWidth="1.400" /><path d="M1 2H27" stroke="#c6c9cc" strokeWidth="2" /><path d="M2 4H26Q14 5 2 15Z" fill="#4a4d50" /><text x="3" y="10" fontFamily="Liberation Mono" fontWeight="700" fontSize="6.500" fill="#e8e8e8">C:\_</text></Ic>
);

const APPS = [
  { icon: <Edge /> },
  { icon: <Explorer />, run: true },
  { icon: <Chrome />, run: true, split: true },
  { icon: <Lock /> },
  { icon: <OfficeIcon letter="X" a="#1e7145" b="#1e7145" grid="green" />, run: true },
  { icon: <OfficeIcon letter="S" a="#009be6" b="#1aa5ea" grid="blue" scale={0.95} />, run: true, on: true },
  { icon: <WebStorm /> },
  { icon: <ArtFolder /> },
  { icon: <Tiles />, run: true },
  { icon: <Notepad />, run: true, split: true },
  { icon: <OfficeIcon letter="W" a="#2a5699" b="#2a5699" lines />, run: true },
  { icon: <OfficeIcon letter="P" a="#d24625" b="#d24625" pie />, run: true },
  { icon: <NotepadPP />, run: true },
  { icon: <Cmd />, run: true },
];

const TABS = [["Insert", 65, 37], ["Page Layout", 109, 81], ["Formulas", 90, 61], ["Data", 60, 33], ["Review", 77, 48], ["View", 60, 33], ["Developer", 98, 70], ["Add-ins", 82, 53], ["Team", 63, 36]];

export default function App() {
  return (
    <Screen>
      <Global />
      <TitleBar>
        <TitleItem $ml={27} $mt={13}><Ic w={16} h={16}><path d="M1 1H15V15H1Z" stroke="#eef6f1" strokeWidth="1.800" /><path d="M4 16V10.500H12V16H9.500V13H8V16Z" fill="#eef6f1" /></Ic></TitleItem>
        <TitleItem $ml={20} $mt={14}><Ic w={18} h={15}><path d="M7 0.500L2 5.500L7 10.500M2 5.500H10.500Q16.500 6 16 10Q15.500 14 10 14" stroke="#eef6f1" strokeWidth="2.500" /></Ic></TitleItem>
        <TitleItem $ml={8} $mt={19}><Caret color="#e4efe8" /></TitleItem>
        <TitleItem $ml={12} $mt={14}><Ic w={18} h={15}><path d="M11 0.500L16 5.500L11 10.500M16 5.500H7.500Q1.500 6 2 10Q2.500 14 7 14" stroke="#4f9370" strokeWidth="2.500" /></Ic></TitleItem>
        <TitleItem $ml={8} $mt={19}><Caret color="#4f9370" /></TitleItem>
        <TitleItem $ml={16} $mt={17}><Ic w={6} h={7}><path d="M0 0.500H6" stroke="#fff" /><path d="M0 3H6L3 6.500Z" fill="#fff" /></Ic></TitleItem>
        <TitleItem $ml={733} $mt={9}><Fit w={130} color="#a5c9b4">project2.xlsx - Excel</Fit></TitleItem>
        <TitleItem $ml={613} $mt={9}><Fit w={46} color="#a5c9b4">Sign in</Fit></TitleItem>
        <TitleItem $ml={29} $mt={13}><Ic w={15} h={12}><path d="M0.500 0.500H14.500V11.500H0.500ZM0.500 2.500H14.500M7.500 10V4.500M5 7L7.500 4.500L10 7" stroke="#6fa688" /></Ic></TitleItem>
        <TitleItem $ml={44} $mt={18}><Ic w={12} h={1}><path d="M0 0.500H12" stroke="#6fa688" /></Ic></TitleItem>
        <TitleItem $ml={45} $mt={13}><Ic w={12} h={12}><path d="M0.500 2.500H9.500V11.500H0.500ZM2.500 2.500V0.500H11.500V9.500H9.500" stroke="#6fa688" /></Ic></TitleItem>
        <TitleItem $ml={45} $mt={13}><Ic w={12} h={12}><path d="M0.500 0.500L11.500 11.500M11.500 0.500L0.500 11.500" stroke="#6fa688" /></Ic></TitleItem>
      </TitleBar>
      <TabBar>
        <Tab $w={76} $file><Fit w={24} color="#fff">File</Fit></Tab>
        <Tab $w={68} $active><Fit w={42} color={GREEN}>Home</Fit></Tab>
        {TABS.map(([t, w, tw], i) => <Tab key={t} $w={w + (i === 0 ? 1 : 0)}><Fit w={tw} color="#fff">{t}</Fit></Tab>)}
        <TellMe>
          <Ic w={13} h={19} mt={1}><path d="M4 13.500Q4 11 2.200 9Q0.600 7 0.800 5Q1.500 0.700 6.500 0.700Q11.500 0.700 12.200 5Q12.400 7 10.800 9Q9 11 9 13.500Z" stroke="#e1eee7" strokeWidth="1.200" /><path d="M4 15.500H9M4.500 18H8.500" stroke="#fff" strokeWidth="1.400" /></Ic>
          <Fit w={190} ml={6} color="#d6e6dc">Tell me what you want to do</Fit>
        </TellMe>
        <Share>
          <Ic w={19} h={20}><circle cx="9" cy="6" r="5.300" stroke="#fff" strokeWidth="1.400" /><path d="M0.700 19.500Q1 12 7 11M14 11.500V20M9.500 15.700H18.500" stroke="#fff" strokeWidth="1.400" /></Ic>
          <Fit w={37} ml={4} mt={1} color="#fff">Share</Fit>
        </Share>
      </TabBar>
      <Ribbon>
        <Clipboard /><FontGroup /><Alignment /><NumberGroup /><Styles /><Cells /><Editing />
        <Ic w={12} h={7} ml={37} mt={98}><path d="M1 6L6 1L11 6" stroke="#777" strokeWidth="2" /></Ic>
      </Ribbon>
      <FormulaBar>
        <Field $w={127}><Caret ml={111} /></Field>
        <Ic w={3} h={13} ml={17} mt={8}><path d="M0 0H3V3H0ZM0 5H3V8H0ZM0 10H3V13H0Z" fill="#b0b0b0" /></Ic>
        <Field $w={137} $ml={17}>
          <Ic w={15} h={13} ml={14}><path d="M1 1L14 13M14 1L1 13" stroke="#c3c3c3" strokeWidth="2.200" /></Ic>
          <Ic w={16} h={13} ml={30}><path d="M1 7L5.500 11.500L15.500 1" stroke="#c3c3c3" strokeWidth="2.800" /></Ic>
          <Glyph $size={21} $serif $italic $w={18} $ml={28} $mt={-2} $color="#444">fx</Glyph>
        </Field>
        <Field $w={1604} $ml={3}>
          <Fit w={21} ml={14} mt={-1}>HR</Fit>
          <Ic w={10} h={7} ml={1552}><path d="M1 1L5 5L9 1" stroke="#666" strokeWidth="2.500" /></Ic>
        </Field>
      </FormulaBar>
      <Sheet>
        <Grid>
          <Row $h={28}>
            <ColHead $corner><Ic w={16} h={15} ml={14}><path d="M16 0V15H0Z" fill="#b4b4b4" /></Ic></ColHead>
            {COLS.map((c) => <ColHead key={c}>{c}</ColHead>)}
            <ColHead />
          </Row>
          {ROWS.map((r, i) => <SheetRow key={i} cells={r} index={i} />)}
        </Grid>
        <ScrollCol>
          <ScrollBtn $h={19}><Ic w={9} h={5}><path d="M0 5H9L4.500 0Z" fill="#777" /></Ic></ScrollBtn>
          <ScrollBtn $h={22} />
          <Track />
          <ScrollBtn $h={17} />
        </ScrollCol>
      </Sheet>
      <SheetTabs>
        <Ic w={35} h={9} ml={28} mt={10}><path d="M5 0V9L0 4.500ZM29 0V9L34 4.500Z" fill="#c0c0c0" /></Ic>
        <Divider $ml={40} $h={21} $mt={4} $c="#9b9b9b" />
        <SheetTab $w={113}><Fit w={85} size={16.5}>Main Sheet</Fit></SheetTab>
        <SheetTab $w={149} $on><Fit w={126} size={16.5} bold color={GREEN}>Student Tickets</Fit></SheetTab>
        <Ic w={21} h={21} ml={32} mt={4}><circle cx="10.500" cy="10.500" r="9.500" stroke="#777" strokeWidth="1.200" /><path d="M10.500 5.500V15.500M5.500 10.500H15.500" stroke="#666" strokeWidth="1.800" /></Ic>
        <Ic w={3} h={14} ml={730} mt={8}><path d="M0 0H3V3H0ZM0 5.500H3V8.500H0ZM0 11H3V14H0Z" fill="#b0b0b0" /></Ic>
        <HBtn><Ic w={5} h={9}><path d="M5 0V9L0 4.500Z" fill="#555" /></Ic></HBtn>
        <HThumb />
      </SheetTabs>
      <Status>
        <Fit w={37} size={13.5} mt={-1}>Ready</Fit>
        <Ic w={15} h={16} ml={20} mt={0}><rect x="1.500" y="2.500" width="13" height="13" stroke="#777" /><path d="M6 2H15V5H6Z" fill="#777" /><circle cx="4" cy="4" r="3.700" fill="#777" /><path d="M3 8H13M3 10.500H13M3 13H13" stroke="#777" strokeDasharray="2 1.500" /></Ic>
        <StatusMark $w={41} $h={23} $ml={1503} $c="#bdbdbd" />
        <StatusMark $w={5} $h={16} $ml={160} $c="#777" />
      </Status>
      <Taskbar>
        <Slot><SlotIcon><Windows /></SlotIcon></Slot>
        <Slot><SlotIcon><TaskView /></SlotIcon></Slot>
        {APPS.map((a, i) => (
          <Slot key={i} $on={a.on}>
            <SlotIcon>{a.icon}</SlotIcon>
            {a.run && <Under $full={a.on} $split={a.split} />}
          </Slot>
        ))}
        <Tray>
          <Ic w={17} h={9} ml={5}><path d="M0.700 8.500L8.500 0.700L16.300 8.500" stroke="#fff" strokeWidth="1.300" /></Ic>
          <Ic w={20} h={20} ml={12}><circle cx="10" cy="10" r="9.700" fill="#f3b44b" /><circle cx="9" cy="8" r="7.500" fill="#f9d47c" /><circle cx="5" cy="7" r="2" fill="#3aa849" /><circle cx="10" cy="4" r="2" fill="#3f7fd6" /><circle cx="4.500" cy="12" r="2" fill="#e5443c" /><circle cx="11" cy="15" r="2" fill="#111" /></Ic>
          <Ic w={21} h={18} ml={10}><path d="M7 0L0 12L3.500 18L10.500 6Z" fill="#11a861" /><path d="M7 0H14L21 12H14Z" fill="#ffcf48" /><path d="M7 12H21L17.500 18H3.500Z" fill="#4688f4" /></Ic>
          <Ic w={20} h={20} ml={10}><path d="M0 3L10 1V16L0 14Z" fill="#80397b" /><rect x="8" y="1" width="10" height="15" fill="#80397b" /><Letter x={6} y={12.500} size={9.500}>N</Letter><path d="M9 14L17 3M11 3L17 14" stroke="#fff" strokeWidth="1.800" /><circle cx="10" cy="16" r="2.300" stroke="#fff" strokeWidth="1.300" /><circle cx="16" cy="16" r="2.300" stroke="#fff" strokeWidth="1.300" /></Ic>
          <Ic w={16} h={16} ml={12}><circle cx="13.500" cy="14" r="1.500" fill="#fff" /><path d="M0.700 15.500Q1.500 2 15.500 0.700M4.700 15.500Q5.500 6 15.500 4.700M8.700 15.500Q9.500 9.500 15.500 8.700" stroke="#ccc" strokeWidth="1.200" /></Ic>
          <Ic w={20} h={14} ml={11}><rect x="4.500" y="3" width="14" height="10" stroke="#fff" /><rect x="6" y="4.500" width="11" height="7" fill="#fff" /><path d="M19.500 6V10" stroke="#fff" /><path d="M1.500 0V2M4.500 0V2M0 2.500H6M1 3V5Q3 7 5 5V3M3 6V12.500H5" stroke="#fff" strokeWidth="1.200" /></Ic>
          <Ic w={18} h={14} ml={10}><path d="M0.500 4.500H3L6.500 0.700V13.300L3 9.500H0.500ZM10.500 3.500L17.500 10.500M17.500 3.500L10.500 10.500" stroke="#eee" strokeWidth="1.100" /></Ic>
          <Clock><Fit w={60} color="#fff">11:12 PM</Fit><Fit w={60} color="#fff">1/5/2017</Fit></Clock>
          <Ic w={20} h={20} ml={27} mt={-1}><path d="M0.500 0.500H19.500V16.500H12.500L10 19.200L7.500 16.500H0.500Z" stroke="#fff" strokeWidth="1.200" /></Ic>
        </Tray>
        <Divider $ml={5} $c="transparent" />
      </Taskbar>
      <Dialog>
        <DialogBar>
          <OfficeIcon letter="S" a="#009be6" b="#1aa5ea" grid="blue" scale={0.64} />
          <Fit w={135} ml={7} mt={-1} color="#000">project2 - Scheduler</Fit>
          <Ic w={12} h={1} ml={316} mt={8}><path d="M0 0.500H12" stroke="#000" /></Ic>
          <Ic w={12} h={12} ml={46} mt={3}><path d="M0.500 0.500H11.500V11.500H0.500Z" stroke="#000" /></Ic>
          <Ic w={12} h={12} ml={47} mt={3}><path d="M0.500 0.500L11.500 11.500M11.500 0.500L0.500 11.500" stroke="#000" strokeWidth="1.200" /></Ic>
        </DialogBar>
        <DialogBody>
          <Text $lh={86} $mt={1}><Fit w={493} size={61} color="#000">Creating Rosters...</Fit></Text>
          <Text $lh={28}><Fit w={391} size={25} color="#000">Student Ticket 190 of 200 complete</Fit></Text>
          <Progress><Bar style={{ width: progress }} /></Progress>
          <Text $lh={30} $mt={1}><Fit w={127} size={25} color="#000">Please wait.</Fit></Text>
        </DialogBody>
      </Dialog>
    </Screen>
  );
}
